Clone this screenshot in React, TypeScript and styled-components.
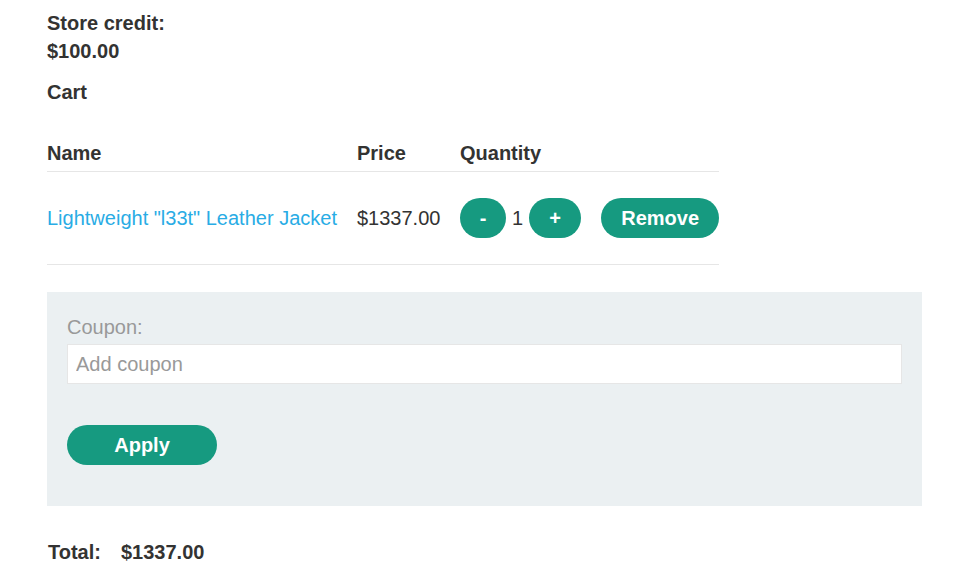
import React, { FC } from "react";
import styled, { createGlobalStyle } from "styled-components";

const GlobalStyle = createGlobalStyle`
  html, body {
    margin: 0;
    padding: 0;
    background: #ffffff;
  }
  body {
    font-family: "Liberation Sans", Arial, sans-serif;
    font-size: 20px;
    line-height: 28px;
    color: #333332;
  }
`;

const StyledPage = styled.div`
  padding: 9px 47px 0 47px;
  width: 875px;
`;
const StyledCredit = styled.p`
  margin: 0;
  font-weight: 700;
`;
const StyledCartTitle = styled.p`
  margin: 13px 0 0 0;
  font-weight: 700;
`;
const StyledTable = styled.table`
  margin-top: 28px;
  border-collapse: collapse;
  table-layout: fixed;
  width: 672px;
`;
const StyledTh = styled.th<{ $w: number }>`
  width: ${(p) => p.$w}px;
  text-align: left;
  font-weight: 700;
  padding: 5px 0 4px 0;
  border-bottom: 1px solid #e6e6e6;
`;
const StyledTd = styled.td`
  height: 92px;
  padding: 0;
  vertical-align: middle;
  white-space: nowrap;
  border-bottom: 1px solid #e6e6e6;
`;
const StyledLink = styled.a`
  color: #29ace5;
  text-decoration: none;
`;
const StyledQtyRow = styled.div`
  display: flex;
  align-items: center;
`;
const StyledButton = styled.button<{ $w: number }>`
  flex-shrink: 0;
  width: ${(p) => p.$w}px;
  height: 40px;
  border: none;
  border-radius: 20px;
  background-color: #169a80;
  color: #ffffff;
  font-family: "Liberation Sans", Arial, sans-serif;
  font-size: 20px;
  font-weight: 700;
  padding: 0;
  cursor: pointer;
`;
const StyledQty = styled.span`
  margin: 0 6px;
`;
const StyledRemove = styled(StyledButton)`
  margin-left: 20px;
`;
const StyledCouponPanel = styled.div`
  margin-top: 27px;
  background: #ebf0f2;
  padding: 21px 20px 41px 20px;
  display: flex;
  flex-direction: column;
`;
const StyledLabel = styled.label`
  color: #999999;
  margin-bottom: 3px;
`;
const StyledInput = styled.input`
  height: 40px;
  box-sizing: border-box;
  border: 1px solid #e6e6e6;
  background: #ffffff;
  padding: 0 8px;
  font-family: "Liberation Sans", Arial, sans-serif;
  font-size: 20px;
  color: #333332;
  outline: none;

  &::placeholder {
    color: #999999;
  }
`;
const StyledApply = styled(StyledButton)`
  margin-top: 41px;
`;
const StyledTotal = styled.div`
  margin-top: 32px;
  padding-left: 1px;
  display: flex;
  gap: 20px;
  font-weight: 700;
`;

const App: FC = () => {
  return (
    <>
      <GlobalStyle />
      <StyledPage>
        <StyledCredit>Store credit:</StyledCredit>
        <StyledCredit>$100.00</StyledCredit>
        <StyledCartTitle>Cart</StyledCartTitle>
        <StyledTable>
          <thead>
            <tr>
              <StyledTh $w={310}>Name</StyledTh>
              <StyledTh $w={103}>Price</StyledTh>
              <StyledTh $w={259}>Quantity</StyledTh>
            </tr>
          </thead>
          <tbody>
            <tr>
              <StyledTd>
                <StyledLink href="#">Lightweight "l33t" Leather Jacket</StyledLink>
              </StyledTd>
              <StyledTd>$1337.00</StyledTd>
              <StyledTd>
                <StyledQtyRow>
                  <StyledButton $w={46}>-</StyledButton>
                  <StyledQty>1</StyledQty>
                  <StyledButton $w={52}>+</StyledButton>
                  <StyledRemove $w={118}>Remove</StyledRemove>
                </StyledQtyRow>
              </StyledTd>
            </tr>
          </tbody>
        </StyledTable>
        <StyledCouponPanel>
          <StyledLabel>Coupon:</StyledLabel>
          <StyledInput type="text" placeholder="Add coupon" />
          <StyledApply $w={150}>Apply</StyledApply>
        </StyledCouponPanel>
        <StyledTotal>
          <span>Total:</span>
          <span>$1337.00</span>
        </StyledTotal>
      </StyledPage>
    </>
  );
};

export default App;
